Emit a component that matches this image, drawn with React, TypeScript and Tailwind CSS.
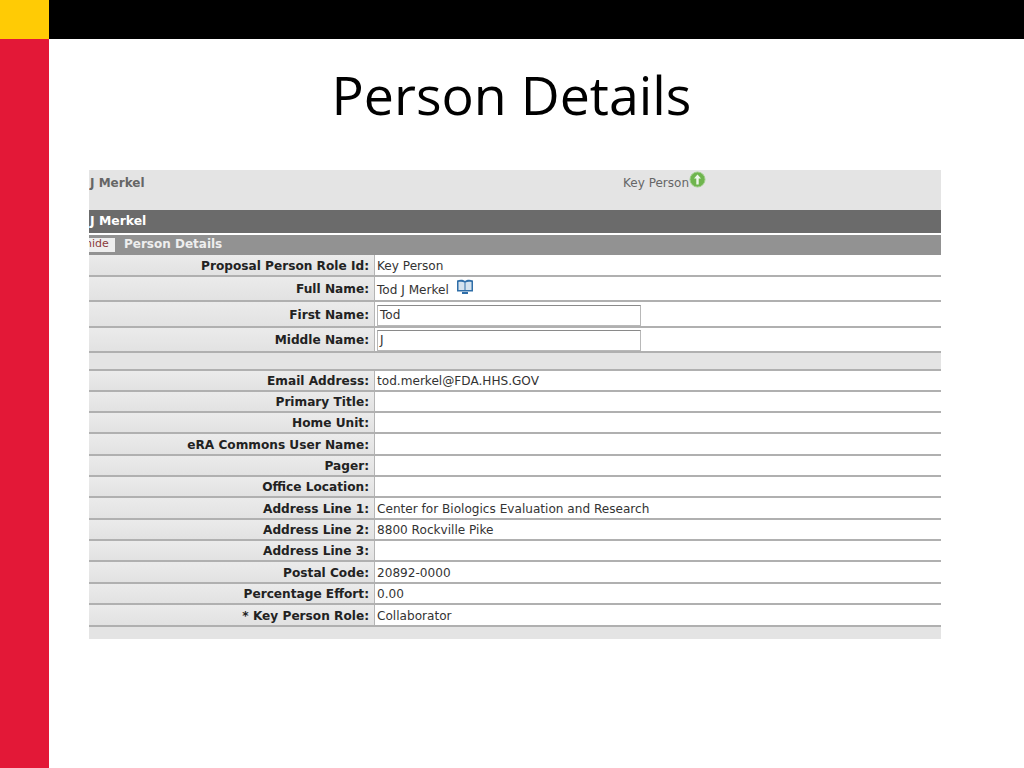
const rows = [
  { label: "Email Address:", value: "tod.merkel@FDA.HHS.GOV", h: "h-[21px]" },
  { label: "Primary Title:", value: "", h: "h-[21px]" },
  { label: "Home Unit:", value: "", h: "h-[21px]" },
  { label: "eRA Commons User Name:", value: "", h: "h-[22px]" },
  { label: "Pager:", value: "", h: "h-[21px]" },
  { label: "Office Location:", value: "", h: "h-[21px]" },
  { label: "Address Line 1:", value: "Center for Biologics Evaluation and Research", h: "h-[22px]" },
  { label: "Address Line 2:", value: "8800 Rockville Pike", h: "h-[21px]" },
  { label: "Address Line 3:", value: "", h: "h-[21px]" },
  { label: "Postal Code:", value: "20892-0000", h: "h-[22px]" },
  { label: "Percentage Effort:", value: "0.00", h: "h-[21px]" },
  { label: "* Key Person Role:", value: "Collaborator", h: "h-[22px]" },
];

function Row({ label, h, children }: { label: string; h: string; children?: React.ReactNode }) {
  return (
    <div className={`flex ${h} border-b-2 border-[#b0b0b0]`}>
      <div className="flex w-[286px] shrink-0 items-center justify-end border-r border-[#b5b5b5] bg-gradient-to-b from-[#ebebeb] to-[#e2e2e2] pt-[2px] pr-[5px] text-[12.15px] font-bold text-[#222]">
        {label}
      </div>
      <div className="flex flex-1 items-center bg-white pt-[2px] pl-[2px] text-[12.1px] text-[#333]">{children}</div>
    </div>
  );
}

function TextBox({ value }: { value: string }) {
  return (
    <div className="flex h-[21px] w-[264px] items-center border border-[#b8b8b8] border-t-[#8a8a8a] bg-white pl-[2px] text-[12.1px] text-[#333]">
      {value}
    </div>
  );
}

export default function App() {
  return (
    <div className="flex h-[768px] w-[1024px] overflow-hidden bg-white font-['Liberation_Sans',sans-serif]">
      <div className="flex w-[49px] shrink-0 flex-col">
        <div className="h-[39px] bg-[#ffcb05]" />
        <div className="flex-1 bg-[#e31837]" />
      </div>
      <div className="flex flex-1 flex-col">
        <div className="h-[39px] bg-black" />
        <h1 className="mt-[16px] h-[80px] pr-[50px] text-center font-['Open_Sans',sans-serif] text-[53.7px] leading-[80px] text-black">
          Person Details
        </h1>
        <div className="mt-[35px] ml-[40px] w-[852px] overflow-hidden font-['DejaVu_Sans',sans-serif]">
          <div className="flex h-[40px] items-start justify-between bg-[#e4e4e4] pt-[5px] pr-[235px] text-[12px] text-[#666]">
            <span className="-mt-[1px] ml-[1px] font-bold">J Merkel</span>
            <span className="flex items-start">
              <span className="-mt-[1px]">Key Person</span>
              <svg width="17" height="17" viewBox="0 0 17 17" className="-mt-[4px]">
                <circle cx="8.5" cy="8.5" r="7.5" fill="#6fb54e" stroke="#9fce8a" />
                <path d="M8.5 3.500 12 7.500H9.700V13.500H7.300V7.500H5z" fill="#eef7ea" />
              </svg>
            </span>
          </div>
          <div className="flex h-[25px] items-center border-b-2 border-white bg-[#6b6b6b] text-[12.4px] font-bold text-white">
            <span className="ml-[1px]">J Merkel</span>
          </div>
          <div className="flex h-[20px] items-center overflow-hidden bg-[#929292]">
            <span className="-mt-[1px] flex h-[14px] w-[26px] shrink-0 items-center bg-[#eee] text-[11px] text-[#8a3a3a]">
              <span className="-ml-[4px]">hide</span>
            </span>
            <span className="-mt-[2px] ml-[9px] text-[12px] font-bold text-[#eee]">Person Details</span>
          </div>
          <Row label="Proposal Person Role Id:" h="h-[22px]">Key Person</Row>
          <Row label="Full Name:" h="h-[25px]">
            <span className="mt-[2px]">Tod J Merkel</span>
            <svg width="18" height="16" viewBox="0 0 18 16" className="-mt-[5px] ml-[7px]">
              <path d="M1 1.500c3-1 6-1 8 .5 2-1.500 5-1.500 8-.5V12.500H1z" fill="#2f6ea8" />
              <path d="M2.500 3c2.500-.5 4.500-.3 6 .5v7.500H2.500zM9.500 3.500c1.500-.8 3.500-1 6-.5v8h-6z" fill="#d5e3ef" />
              <path d="M6 14h6" stroke="#2f6ea8" strokeWidth="2" />
            </svg>
          </Row>
          <Row label="First Name:" h="h-[26px]"><TextBox value="Tod" /></Row>
          <Row label="Middle Name:" h="h-[25px]"><TextBox value="J" /></Row>
          <div className="h-[18px] border-b-2 border-[#b0b0b0] bg-[#e4e4e4]" />
          {rows.map((r) => (
            <Row key={r.label} label={r.label} h={r.h}>{r.value}</Row>
          ))}
          <div className="h-[12px] bg-[#e4e4e4]" />
        </div>
      </div>
    </div>
  );
}
